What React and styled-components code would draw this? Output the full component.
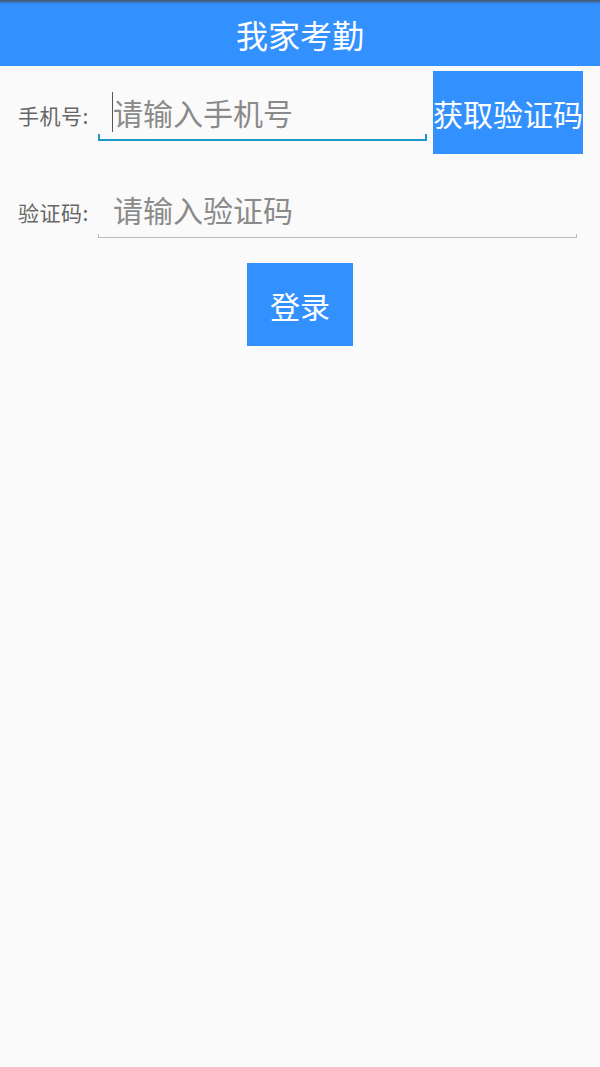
import React from "react";
import styled, { createGlobalStyle } from "styled-components";

const GlobalStyle = createGlobalStyle`
  html, body {
    margin: 0;
    padding: 0;
    background: #fafafa;
    font-family: "Noto Sans CJK SC", "Noto Sans", sans-serif;
  }
  * { box-sizing: border-box; }
`;

const Page = styled.div`
  width: 600px;
  min-height: 1067px;
  background: #fafafa;
  display: flex;
  flex-direction: column;
`;

const Header = styled.header`
  height: 66px;
  background: linear-gradient(#4a5560 0px, #3a6fb0 2px, #3391ff 4px, #3391ff 100%);
  color: #ffffff;
  display: flex;
  align-items: center;
  justify-content: center;
  padding-top: 2px;
  font-size: 32px;
  line-height: 40px;
`;

const Form = styled.div`
  display: flex;
  flex-direction: column;
`;

const Row = styled.div`
  display: flex;
  align-items: flex-start;
  padding: 0 ${(p) => p.$right}px 0 18px;
  margin-top: ${(p) => p.$top}px;
`;

const Label = styled.span`
  width: 80px;
  flex: none;
  margin-top: 33px;
  font-size: 21px;
  line-height: 22px;
  color: #666666;
  letter-spacing: 0.5px;
`;

const Field = styled.div`
  position: relative;
  flex: 1;
  height: 70px;
  padding: 21px 0 0 15px;
  border-bottom: ${(p) => (p.$focused ? "2px solid #1a98c8" : "1px solid #bdbdbd")};
  &::before,
  &::after {
    content: "";
    position: absolute;
    bottom: 0;
    width: ${(p) => (p.$focused ? 2 : 1)}px;
    height: ${(p) => (p.$focused ? 5 : 3)}px;
    background: ${(p) => (p.$focused ? "#1a98c8" : "#bdbdbd")};
  }
  &::before { left: 0; }
  &::after { right: 0; }
`;

const Input = styled.input`
  display: block;
  width: 100%;
  height: 40px;
  border: none;
  outline: none;
  background: transparent;
  padding: 0;
  font-family: inherit;
  font-size: 30px;
  line-height: 40px;
  color: #333;
  caret-color: transparent;
  &::placeholder {
    color: #8a8a8a;
    opacity: 1;
  }
`;

const Caret = styled.span`
  position: absolute;
  left: 14px;
  top: 21px;
  width: 1px;
  height: 40px;
  background: #555;
`;

const BlueButton = styled.button`
  flex: none;
  width: ${(p) => p.$w}px;
  height: 83px;
  margin-left: ${(p) => p.$ml || 0}px;
  background: #3391ff;
  border: none;
  border-radius: 0;
  color: #ffffff;
  font-family: inherit;
  font-size: 30px;
  line-height: 40px;
  padding: 0;
  white-space: nowrap;
  display: flex;
  align-items: center;
  justify-content: center;
`;

const Center = styled.div`
  display: flex;
  justify-content: center;
  margin-top: 25px;
`;

export default function App() {
  return (
    <Page>
      <GlobalStyle />
      <Header>我家考勤</Header>
      <Form>
        <Row $top={5} $right={17}>
          <Label>手机号:</Label>
          <Field $focused>
            <Caret />
            <Input placeholder="请输入手机号" />
          </Field>
          <BlueButton $w={150} $ml={6}>获取验证码</BlueButton>
        </Row>
        <Row $top={14} $right={23}>
          <Label>验证码:</Label>
          <Field>
            <Input placeholder="请输入验证码" />
          </Field>
        </Row>
        <Center>
          <BlueButton $w={106}>登录</BlueButton>
        </Center>
      </Form>
    </Page>
  );
}
